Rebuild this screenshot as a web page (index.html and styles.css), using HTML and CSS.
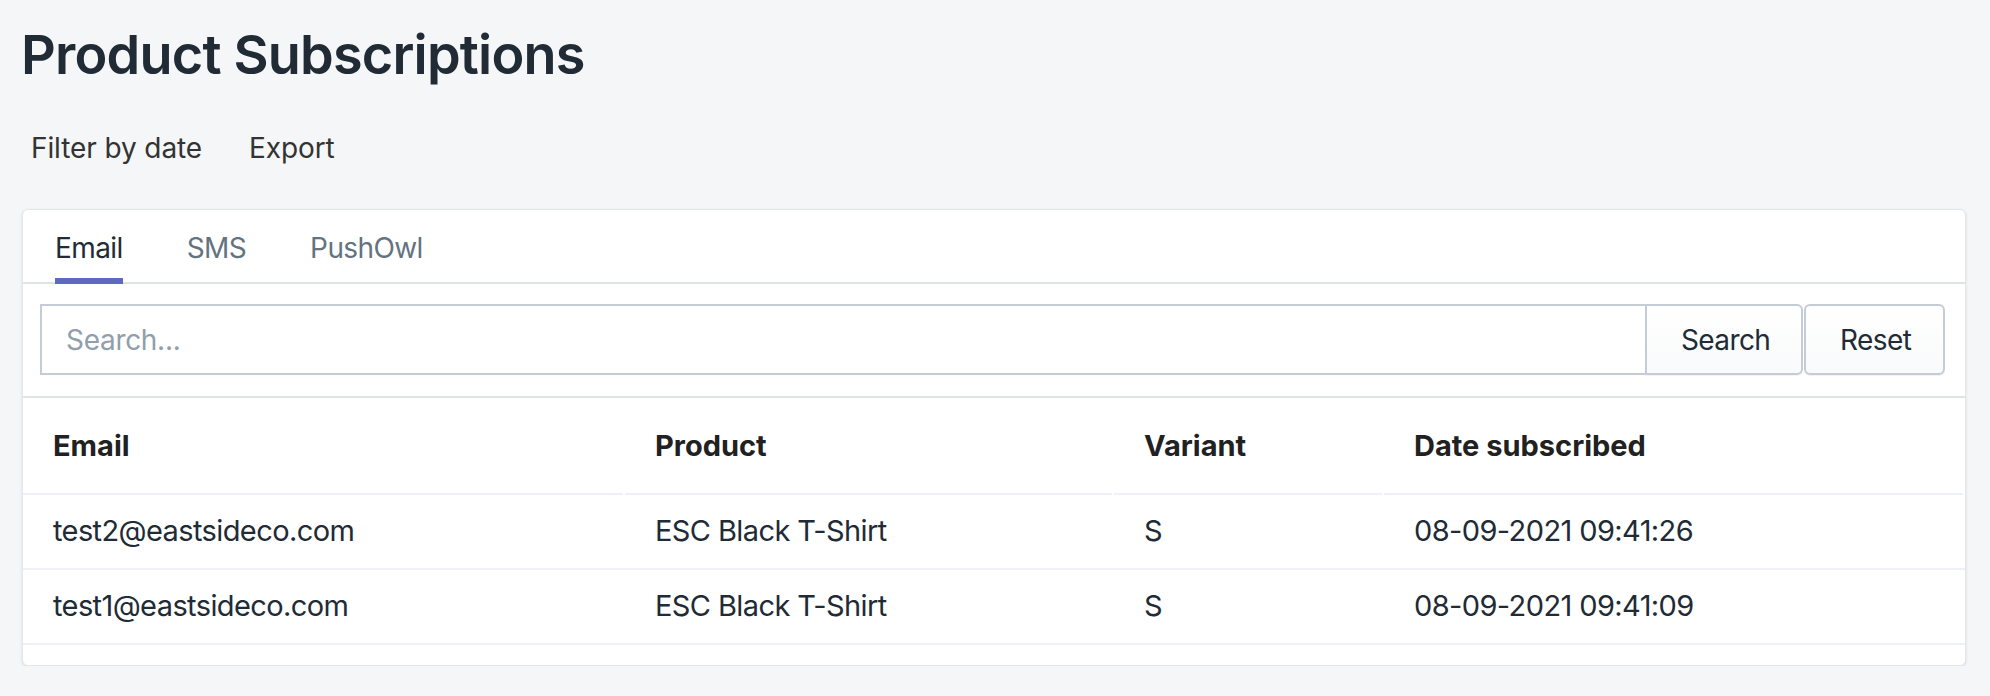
FILE: index.html
```html
<!DOCTYPE html>
<html>
<head>
  <meta charset="UTF-8" />
  <title>Product Subscriptions</title>
  <link rel="stylesheet" href="styles.css">
</head>
<body>

  <div class="page">
    <h1 class="page-title">Product Subscriptions</h1>

    <div class="page-actions">
      <button class="link-button">Filter by date</button>
      <button class="link-button">Export</button>
    </div>

    <div class="card">
      <div class="tabs">
        <button class="tab active">Email</button>
        <button class="tab">SMS</button>
        <button class="tab">PushOwl</button>
      </div>

      <form class="search-bar" onsubmit="return false">
        <input class="search-input" type="text" placeholder="Search...">
        <button class="btn btn-attached" type="submit">Search</button>
        <button class="btn btn-reset" type="reset">Reset</button>
      </form>

      <table class="subs-table">
        <thead>
          <tr>
            <th class="col-email">Email</th>
            <th class="col-product">Product</th>
            <th class="col-variant">Variant</th>
            <th class="col-date">Date subscribed</th>
          </tr>
        </thead>
        <tbody>
          <tr>
            <td>test2@eastsideco.com</td>
            <td>ESC Black T-Shirt</td>
            <td>S</td>
            <td>08-09-2021 09:41:26</td>
          </tr>
          <tr>
            <td>test1@eastsideco.com</td>
            <td>ESC Black T-Shirt</td>
            <td>S</td>
            <td>08-09-2021 09:41:09</td>
          </tr>
        </tbody>
      </table>
    </div>
  </div>

</body>
</html>
```

FILE: styles.css
```css
html, body {
  margin: 0;
  background-color: #f4f6f8;
  color: #212b36;
  font-family: Inter, "Liberation Sans", sans-serif;
}

.page {
  padding: 21px 24px 0 22px;
}

.page-title {
  margin: 0 0 0 -1px;
  font-size: 54px;
  line-height: 68px;
  font-weight: 600;
  letter-spacing: -0.8px;
  color: #212b36;
}

.page-actions {
  display: flex;
  gap: 30px;
  margin-top: 30px;
}

.link-button {
  padding: 12px 8px 12px 9px;
  background: transparent;
  border: none;
  font-family: inherit;
  font-size: 28px;
  line-height: 34px;
  letter-spacing: -0.1px;
  color: #333;
  cursor: pointer;
}

.card {
  margin-top: 32px;
  background-color: #fff;
  border: 1px solid #e3e6ea;
  border-radius: 6px;
  box-shadow: 0 1px 3px rgba(63, 63, 68, 0.15);
  padding-bottom: 20px;
}

.tabs {
  display: flex;
  gap: 64px;
  padding-left: 32px;
  border-bottom: 2px solid #dfe3e8;
}

.tab {
  padding: 21px 0 13px;
  margin-bottom: -2px;
  background: transparent;
  border: none;
  border-bottom: 6px solid transparent;
  font-family: inherit;
  font-size: 28px;
  line-height: 34px;
  letter-spacing: -0.6px;
  color: #637381;
  cursor: pointer;
}

.tab.active {
  color: #212b36;
  border-bottom-color: #5c6ac4;
}

.search-bar {
  display: flex;
  margin: 0;
  padding: 20px 20px 21px 17px;
  border-bottom: 2px solid #dfe3e8;
}

.search-input {
  flex: 1;
  box-sizing: border-box;
  height: 71px;
  padding: 0 24px;
  border: 2px solid #c4cdd5;
  border-radius: 0;
  font-family: inherit;
  font-size: 28px;
  letter-spacing: -0.3px;
  color: #212b36;
  outline: none;
}

.search-input::placeholder {
  color: #919eab;
}

.btn {
  box-sizing: border-box;
  height: 71px;
  padding: 0 34px;
  background: linear-gradient(#fff, #f9fafb);
  border: 2px solid #c4cdd5;
  border-radius: 6px;
  box-shadow: 0 1px 0 rgba(22, 29, 37, 0.05);
  font-family: inherit;
  font-size: 28px;
  letter-spacing: -0.6px;
  color: #212b36;
  cursor: pointer;
}

.btn-attached {
  width: 158px;
  margin-left: -2px;
  border-radius: 0 6px 6px 0;
}

.btn-reset {
  width: 141px;
  margin-left: 1px;
}

.subs-table {
  width: 100%;
  border-collapse: collapse;
  font-size: 29px;
  line-height: 36px;
}

.subs-table th {
  padding: 30px 30px 31px;
  text-align: left;
  font-weight: 700;
  color: #212121;
  background: linear-gradient(#f0f0fa, #f0f0fa) no-repeat left bottom / calc(100% - 2px) 2px;
}

.subs-table td {
  padding: 18px 30px 19px;
  border-bottom: 2px solid #f0f0fa;
  letter-spacing: -0.6px;
  color: #212b36;
}

.col-email { width: 542px; }
.col-product { width: 429px; }
.col-variant { width: 210px; }
```
